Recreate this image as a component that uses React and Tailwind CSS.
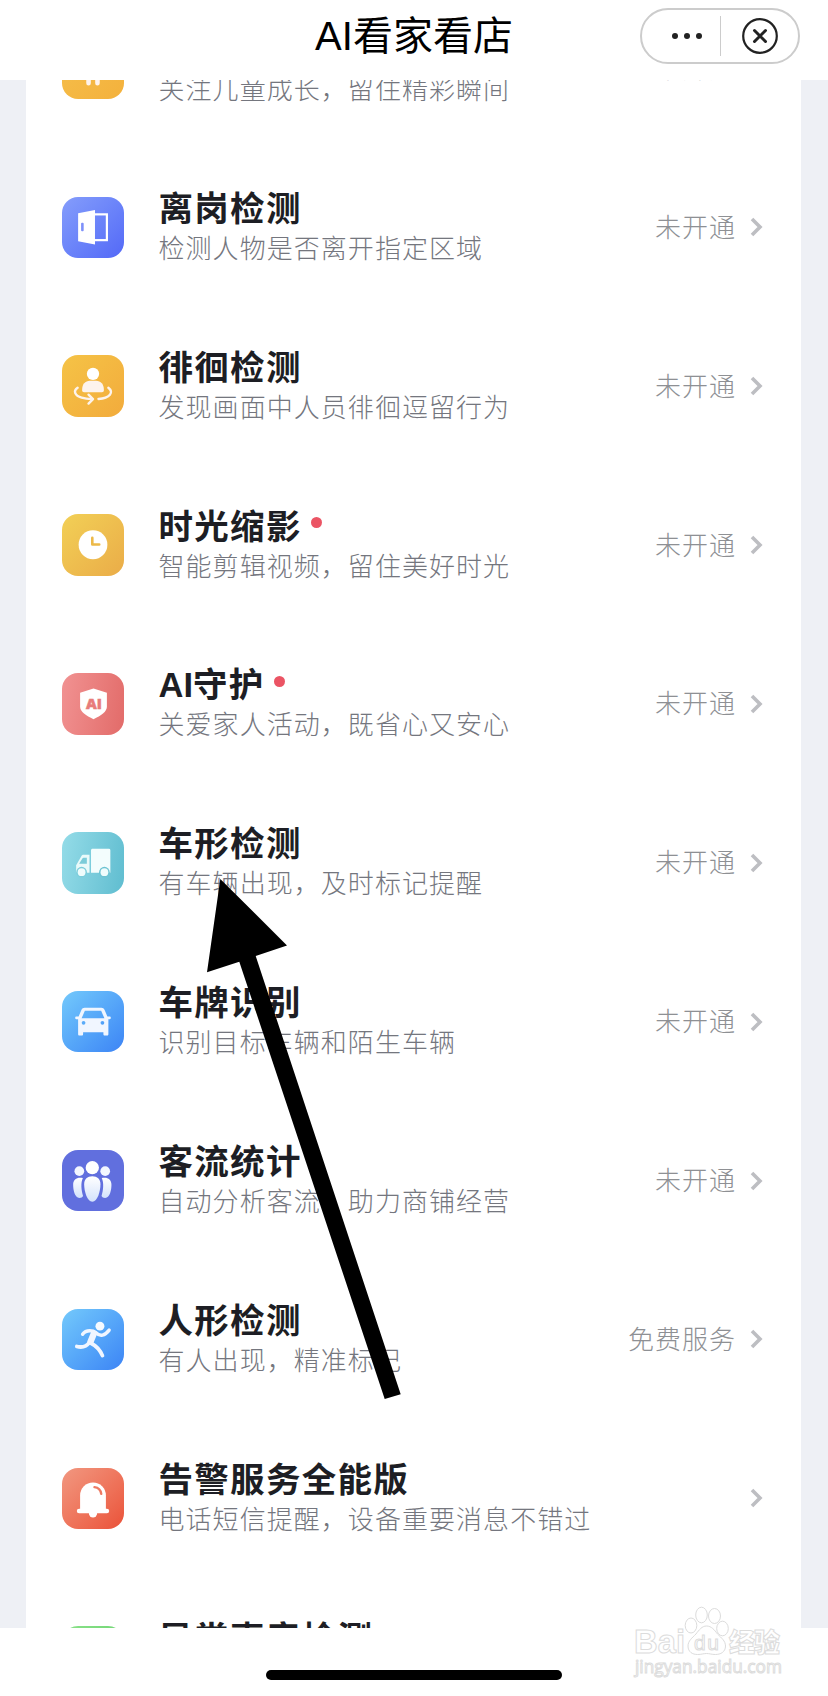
const FONT = "font-['Liberation_Sans','Noto_Sans_CJK_SC',sans-serif]";

function DoorIcon() {
  return (
    <svg viewBox="0 0 62 62" className="size-full">
      <rect x="30" y="17.5" width="15" height="26" fill="none" stroke="#fff" strokeWidth="2.2" />
      <path d="M16 16.5 33 13v35L16 44.5z" fill="#fff" />
      <rect x="19" y="26" width="2.6" height="8.5" rx="1" fill="#7d90fa" />
    </svg>
  );
}

function LoiterIcon() {
  return (
    <svg viewBox="0 0 62 62" className="size-full">
      <circle cx="31" cy="19" r="6.2" fill="#fff" />
      <path d="M20 35.5c0-6 3-9.5 8-9.5h6c5 0 8 3.5 8 9.5 0 1.2-.8 2-2 2H22c-1.2 0-2-.8-2-2z" fill="#fdf3ec" />
      <path
        d="M15.500 33c-5 3.500-2.500 8 4 10 3.500 1 6.500 1.400 10 1.500M46.500 33c6 4.500 1.500 10.500-10 11.300"
        fill="none"
        stroke="#fdf3ec"
        strokeWidth="2.4"
        strokeLinecap="round"
      />
      <path d="M26.500 40l4.500 4.500-4.500 4.500" fill="none" stroke="#fdf3ec" strokeWidth="2.4" strokeLinecap="round" strokeLinejoin="round" />
    </svg>
  );
}

function ClockIcon() {
  return (
    <svg viewBox="0 0 62 62" className="size-full">
      <circle cx="31" cy="31" r="14.5" fill="#fff" />
      <path d="M30.300 24v6.700h7" fill="none" stroke="#ecb948" strokeWidth="2.6" strokeLinecap="round" strokeLinejoin="round" />
    </svg>
  );
}

function ShieldIcon() {
  return (
    <svg viewBox="0 0 62 62" className="size-full">
      <path d="M31.500 15.500 45 20v14c0 5-6 9-13.500 12.500C24 43 18 39 18 34V20z" fill="#fff" />
      <text x="32" y="36.300" textAnchor="middle" fontSize="15" fontWeight="800" fill="#e87c7a" stroke="#e87c7a" strokeWidth=".5" className="font-['Open_Sans',sans-serif]">
        AI
      </text>
    </svg>
  );
}

function TruckIcon() {
  return (
    <svg viewBox="0 0 62 62" className="size-full">
      <path d="M30 17h17a1.500 1.500 0 0 1 1.500 1.500V41H29V18z" fill="#f3fdfd" />
      <path d="M27.500 23v18H14v-7.500L19.500 24c.5-.7 1-1 2-1z" fill="#e9fafa" />
      <path d="M24.800 26v6H17l3.300-5.300c.3-.5.600-.7 1.200-.7z" fill="#7bccd9" />
      <circle cx="19.500" cy="40.500" r="5.400" fill="#7bcddb" />
      <circle cx="42.500" cy="40.500" r="5.400" fill="#6cc3d2" />
      <circle cx="19.500" cy="40.500" r="3.900" fill="#effcfc" />
      <circle cx="42.500" cy="40.500" r="3.900" fill="#effcfc" />
    </svg>
  );
}

function CarIcon() {
  return (
    <svg viewBox="0 0 62 62" className="size-full">
      <path
        fillRule="evenodd"
        d="M22.500 17h17c1.500 0 2.500.7 3.100 2l2.900 6.600h2.300c1.600 0 1.600 2.800 0 2.800h-1.300V43.500c0 .8-.5 1.300-1.300 1.300h-2.400c-.8 0-1.300-.5-1.300-1.300V41.500H21V43.500c0 .8-.5 1.300-1.300 1.300h-2.400c-.8 0-1.300-.5-1.300-1.300V28.400h-1.800c-1.600 0-1.600-2.800 0-2.800h2.300L19.400 19c.6-1.300 1.600-2 3.100-2zM22.800 19.800l-3.300 7.700h23L39.200 19.800zM21.500 30.200a1.900 1.900 0 1 0 0 3.800 1.900 1.900 0 0 0 0-3.800zM40.500 30.200a1.900 1.900 0 1 0 0 3.800 1.900 1.900 0 0 0 0-3.800z"
        fill="#f1f6ff"
      />
    </svg>
  );
}

function CrowdIcon() {
  return (
    <svg viewBox="0 0 62 62" className="size-full">
      <defs>
        <linearGradient id="crowd" x1="0" y1="0" x2="0" y2="1">
          <stop offset="0" stopColor="#fff" />
          <stop offset="1" stopColor="#d3e2fb" />
        </linearGradient>
      </defs>
      <circle cx="17.200" cy="21.300" r="4.900" fill="#f3f7ff" />
      <circle cx="43.300" cy="21.300" r="4.900" fill="#f3f7ff" />
      <circle cx="30.300" cy="17.800" r="6.700" fill="#fff" />
      <path d="M20.800 28.300c-5.500-1.300-9.800 1-9.800 6.700 0 5 1.500 13.300 6.300 13.300 2 0 3-.8 3.700-2-1.800-5.500-2.600-13.300-.2-18z" fill="url(#crowd)" />
      <path d="M39.800 28.300c5.500-1.300 9.800 1 9.800 6.700 0 5-1.500 13.300-6.300 13.300-2 0-3-.8-3.700-2 1.800-5.500 2.600-13.300.2-18z" fill="url(#crowd)" />
      <path d="M30.300 26.500c5 0 8.200 2.800 8.200 8 0 7-3 17.700-8.200 17.700s-8.200-10.700-8.200-17.700c0-5.200 3.200-8 8.200-8z" fill="url(#crowd)" />
    </svg>
  );
}

function RunnerIcon() {
  return (
    <svg viewBox="0 0 62 62" className="size-full">
      <circle cx="38" cy="17.300" r="4.500" fill="#f6faff" />
      <g fill="none" stroke="#f1f6ff" strokeLinecap="round" strokeLinejoin="round">
        <path d="M20.500 25.500c2-3 5-4.500 11-3.200" strokeWidth="3.4" />
        <path d="M34 24c4 4 9 3 13.300-2.700" strokeWidth="3.4" />
        <path d="M32 24.500 28.500 33" strokeWidth="6.4" />
        <path d="M27.500 33.500c-3.500 5-8 5.500-12.800 4.300" strokeWidth="3.800" />
        <path d="M29 34.500c6 3 9 6.500 11.500 12.500" strokeWidth="3.800" />
      </g>
    </svg>
  );
}

function BellIcon() {
  return (
    <svg viewBox="0 0 62 62" className="size-full">
      <path d="M18 42V27.500a13 13 0 0 1 26 0V42z" fill="#fff" />
      <path d="M17 43.300h28" stroke="#fff" strokeWidth="4.6" strokeLinecap="round" />
      <path d="M26.800 45h8.400a4.200 5 0 0 1-8.400 0z" fill="#fff" />
      <path d="M32.500 19.300c3.700.5 6.300 3 6.800 6.800" fill="none" stroke="#ee7a63" strokeWidth="2.4" strokeLinecap="round" />
    </svg>
  );
}

function ChildIcon() {
  return (
    <svg viewBox="0 0 62 62" className="size-full">
      <path d="M26.500 36v9.500M35.500 36v9.500" stroke="#fff3ec" strokeWidth="4.6" strokeLinecap="round" />
    </svg>
  );
}

const services = [
  { title: '儿童看护', desc: '关注儿童成长，留住精彩瞬间', status: '未开通', Icon: ChildIcon, tile: 'bg-linear-to-br from-[#f5c04c] to-[#f4b13c]' },
  { title: '离岗检测', desc: '检测人物是否离开指定区域', status: '未开通', Icon: DoorIcon, tile: 'bg-linear-to-br from-[#859dfb] to-[#5468f7]' },
  { title: '徘徊检测', desc: '发现画面中人员徘徊逗留行为', status: '未开通', Icon: LoiterIcon, tile: 'bg-linear-to-br from-[#f5c346] to-[#f2ab3c]' },
  { title: '时光缩影', desc: '智能剪辑视频，留住美好时光', status: '未开通', dot: true, Icon: ClockIcon, tile: 'bg-linear-to-br from-[#f2d056] to-[#eaac48]' },
  { prefix: 'AI', title: '守护', desc: '关爱家人活动，既省心又安心', status: '未开通', dot: true, Icon: ShieldIcon, tile: 'bg-linear-100 from-[#f19292] to-[#e26b69]' },
  { title: '车形检测', desc: '有车辆出现，及时标记提醒', status: '未开通', Icon: TruckIcon, tile: 'bg-linear-100 from-[#94dce8] to-[#5fbdd0]' },
  { title: '车牌识别', desc: '识别目标车辆和陌生车辆', status: '未开通', Icon: CarIcon, tile: 'bg-linear-to-br from-[#74c9fb] to-[#3d84f5]' },
  { title: '客流统计', desc: '自动分析客流，助力商铺经营', status: '未开通', Icon: CrowdIcon, tile: 'bg-[#616fde]' },
  { title: '人形检测', desc: '有人出现，精准标记', status: '免费服务', Icon: RunnerIcon, tile: 'bg-linear-to-br from-[#74c9fb] to-[#3d84f5]' },
  { title: '告警服务全能版', desc: '电话短信提醒，设备重要消息不错过', Icon: BellIcon, tile: 'bg-linear-to-br from-[#f19780] to-[#ea5138]' },
  { title: '异常声音检测', desc: '', Icon: BellIcon, tile: 'bg-linear-to-br from-[#8be28a] to-[#5bcb62]' },
];

function Header() {
  return (
    <header className="relative flex h-20 items-start justify-center bg-white">
      <h1 className="mt-1.5 text-[40px] leading-[60px] text-black">AI看家看店</h1>
      <div className="absolute top-2 right-7 flex h-14 w-40 items-center rounded-full border-2 border-[#cccccc]">
        <button type="button" aria-label="更多" className="flex w-[78px] items-center justify-center gap-1.5 pl-3">
          <span className="size-1.5 rounded-full bg-[#222]" />
          <span className="size-1.5 rounded-full bg-[#222]" />
          <span className="size-1.5 rounded-full bg-[#222]" />
        </button>
        <span className="h-10 w-px bg-[#cccccc]" />
        <button type="button" aria-label="关闭" className="flex flex-1 justify-center">
          <svg viewBox="0 0 36 36" className="size-9" fill="none" stroke="#222">
            <circle cx="18" cy="18" r="16.800" strokeWidth="2.2" />
            <path d="M12.500 12.500l11 11M23.500 12.500l-11 11" strokeWidth="3" strokeLinecap="round" />
          </svg>
        </button>
      </div>
    </header>
  );
}

function ServiceRow({ item }) {
  const { prefix, title, desc, status, dot, Icon, tile } = item;
  return (
    <li className="flex h-[158.875px] shrink-0 items-center pr-[37px] pl-9">
      <div className={`h-[61.5px] w-[62px] shrink-0 rounded-2xl ${tile}`}>
        <Icon />
      </div>
      <div className="ml-[34.5px] flex-1 pt-[3px] whitespace-nowrap">
        <div className="flex h-10 items-center">
          <h2 className="text-[34.5px] leading-10 font-bold tracking-[1.3px] text-[#1d1e24]">
            {prefix && <span className="tracking-normal">{prefix}</span>}
            {title}
          </h2>
          {dot && <span className="mb-2 ml-[9px] size-[11px] rounded-full bg-[#eb5464]" />}
        </div>
        <p className="h-10 text-[26px] leading-10 font-light tracking-[1.05px] text-[#74767e]">{desc}</p>
      </div>
      <span className="pt-0.5 text-[26px] font-light tracking-[1px] text-[#8e9094]">{status}</span>
      <svg viewBox="0 0 14 20" className="ml-3.5 h-5 w-3.5" fill="none" stroke="#bdbec2" strokeWidth="3.6">
        <path d="M2 2l8 8-8 8" />
      </svg>
    </li>
  );
}

// hand drawn pointer over the list
function Pointer() {
  return (
    <svg viewBox="0 0 828 1696" className="pointer-events-none absolute inset-0 h-[1696px] w-[828px]">
      <path d="M220.300 879 287 945.500 255.700 956 400.700 1394.300 384.700 1399 239.300 961.700 207 972.300z" fill="#000" />
    </svg>
  );
}

function Watermark() {
  return (
    <svg viewBox="0 0 160 80" className="absolute top-[1600px] left-[631px] h-20 w-40" fill="#fff" stroke="#dcdcdc" strokeWidth="1">
      <ellipse cx="60" cy="25.500" rx="5.800" ry="7.500" />
      <ellipse cx="70.500" cy="15" rx="5.800" ry="7.800" />
      <ellipse cx="83.500" cy="16" rx="6" ry="7.500" />
      <ellipse cx="91.500" cy="28.500" rx="5.800" ry="7.300" />
      <path d="M75.500 26c5 0 8 4 11 8 4 4 8 7 8 12 0 6-5 8.500-10 8.500-4 0-6-1-9-1s-5 1-9 1c-5 0-9.500-2.500-9.500-8.500 0-5 4-8 8-12 3-4 6-8 10.500-8z" />
      <text x="3" y="53" fontSize="33" fontWeight="700" textLength="51" lengthAdjust="spacingAndGlyphs">Bai</text>
      <text x="63" y="50" fontSize="21" fontWeight="400" textLength="25">du</text>
      <text x="98" y="52" fontSize="26" fontWeight="900" textLength="51">经验</text>
      <text x="4" y="73" fontSize="18" textLength="147" lengthAdjust="spacingAndGlyphs" className="font-['Open_Sans',sans-serif]">jingyan.baidu.com</text>
    </svg>
  );
}

export default function App() {
  return (
    <div className={`relative flex h-[1696px] w-[828px] flex-col overflow-hidden bg-white ${FONT}`}>
      <Header />
      <main className="h-[1548px] shrink-0 overflow-hidden bg-[#eef0f5] pr-[27px] pl-[26px]">
        <ul className="-mt-[91px] flex flex-col bg-white">
          {services.map((item) => (
            <ServiceRow key={item.title} item={item} />
          ))}
        </ul>
      </main>
      <footer className="flex flex-1 justify-center pt-[42px]">
        <div className="h-2.5 w-[296px] rounded-full bg-black" />
      </footer>
      <Pointer />
      <Watermark />
    </div>
  );
}
